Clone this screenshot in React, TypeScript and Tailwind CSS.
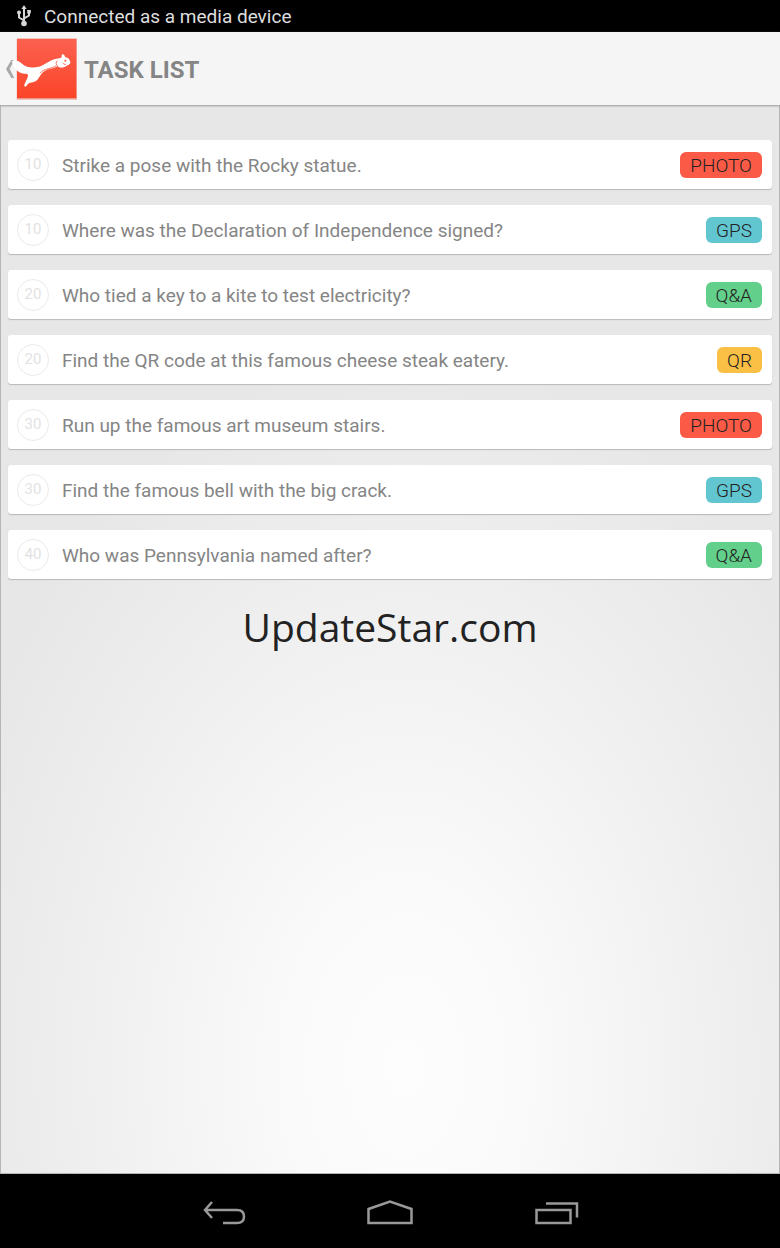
import React from 'react';

type TaskKind = 'PHOTO' | 'GPS' | 'Q&A' | 'QR';

interface TaskRowProps {
  points: number;
  title: string;
  kind: TaskKind;
}

const tasks: TaskRowProps[] = [
  { points: 10, title: 'Strike a pose with the Rocky statue.', kind: 'PHOTO' },
  { points: 10, title: 'Where was the Declaration of Independence signed?', kind: 'GPS' },
  { points: 20, title: 'Who tied a key to a kite to test electricity?', kind: 'Q&A' },
  { points: 20, title: 'Find the QR code at this famous cheese steak eatery.', kind: 'QR' },
  { points: 30, title: 'Run up the famous art museum stairs.', kind: 'PHOTO' },
  { points: 30, title: 'Find the famous bell with the big crack.', kind: 'GPS' },
  { points: 40, title: 'Who was Pennsylvania named after?', kind: 'Q&A' },
];

const kindColors: Record<TaskKind, string> = {
  PHOTO: 'bg-[#fb5b46]',
  GPS: 'bg-[#62c6d0]',
  'Q&A': 'bg-[#62cf8a]',
  QR: 'bg-[#f9c045]',
};

const UsbIcon: React.FC = () => (
  <svg className="h-[22px] w-4" viewBox="0 0 16 22" fill="none" stroke="#d8d8d8" strokeWidth="2" aria-hidden="true">
    <path d="M8 3v15M8 15.5l-5-3V8M8 13.5l5-3V7" />
    <path d="M8 0l2.6 4H5.4z" fill="#d8d8d8" stroke="none" />
    <circle cx="8" cy="18.500" r="2.8" fill="#d8d8d8" stroke="none" />
    <circle cx="3" cy="7.5" r="2" fill="#d8d8d8" stroke="none" />
    <path d="M11.2 5h3.6v3.6h-3.6z" fill="#d8d8d8" stroke="none" />
  </svg>
);

const SquirrelLogo: React.FC = () => (
  <svg className="h-[62px] w-[72px]" viewBox="0 0 216 186" aria-hidden="true">
    <defs>
      <linearGradient id="logo-bg" x1="0" y1="0" x2="0" y2="1">
        <stop offset="0" stopColor="#fb6150" />
        <stop offset="1" stopColor="#fb4529" />
      </linearGradient>
    </defs>
    <path d="M19 66L3 93l16 27h9L14 93l14-27z" fill="#a9a9a9" />
    <path d="M35 2h181v183H35z" fill="#e9b5ac" />
    <path d="M36 2h178v179H36z" fill="url(#logo-bg)" />
    <path
      d="M26 66c12 1 18 5 27 13 10 8 23 11 38 9 16-1 25-8 38-15 10-6 22-11 34-12 4-1 6-2 7-4-1-4 0-7 3-8 4 0 6 3 7 8 8 1 13 6 15 12 2 5 1 9-4 11-5 1-8 6-15 8-7 2-14 1-19-4-4 5-12 7-20 8-13 2-22 8-28 16-5 7-8 15-16 21-9 6-17 3-23 8-4 3-5 7-9 9-4 0-4-5-1-11 4-8 9-16 9-23 0-5-4-5-10-5-13 0-23-7-29-16-5-8-6-15-10-20z"
      fill="#fff"
    />
    <path d="M105 106c5-7 14-11 25-14 9-2 16-4 24-9M157 68c-5 5-5 12 1 15M183 79c-4 1-7-1-10-4" fill="none" stroke="#fb5340" strokeWidth="2.5" />
    <circle cx="181" cy="68" r="3" fill="#fb5340" />
  </svg>
);

const TaskRow: React.FC<TaskRowProps> = ({ points, title, kind }) => (
  <li className="flex h-[49px] items-center rounded-[3px] bg-white pr-[10px] pl-[9px] shadow-[0_1px_1px_#b8b8b8]">
    <span className="flex size-8 shrink-0 items-center justify-center rounded-full border border-[#ebebeb] text-[15px] text-[#e2e2e2]">
      {points}
    </span>
    <span className="ml-[13px] flex-1 pt-0.5 text-[19px] leading-6 text-[#858585]">{title}</span>
    <span className={`rounded-md px-[10px] pt-px text-[19px] leading-[25px] font-light text-[#222] ${kindColors[kind]}`}>
      {kind}
    </span>
  </li>
);

const App: React.FC = () => {
  return (
    <div className="flex min-h-screen flex-col bg-black font-['Roboto',sans-serif]">
      <div className="flex h-8 items-center gap-3 pl-4 text-[19px] text-[#dedede]">
        <UsbIcon />
        <span className="pt-0.5">Connected as a media device</span>
      </div>

      <header className="relative flex h-[73px] items-center bg-[#f5f5f5] shadow-[0_1px_2px_#999]">
        <button type="button" className="ml-[5px]" aria-label="Navigate up">
          <SquirrelLogo />
        </button>
        <h1 className="ml-[7px] pt-0.5 text-2xl font-bold text-[#858585]">TASK LIST</h1>
      </header>

      <main className="flex-1 border-x border-b border-[#b5b5b5] bg-[radial-gradient(ellipse_480px_720px_at_52%_90%,#fdfdfd_0%,#fafafa_25%,#ededed_75%,#e7e7e7_100%)] px-[7px] pt-[35px]">
        <ul className="flex flex-col gap-4">
          {tasks.map((task) => (
            <TaskRow key={task.title} {...task} />
          ))}
        </ul>
        <p className="pt-5 text-center font-['Open_Sans',sans-serif] text-[39px] leading-[56px] text-[#222]">
          UpdateStar.com
        </p>
      </main>

      <nav className="flex h-[74px] items-center justify-center gap-[120px] pt-1">
        <button type="button" aria-label="Back">
          <svg className="h-7 w-12" viewBox="0 0 48 28" fill="none" stroke="#999" strokeWidth="2.5">
            <path d="M14 3L7 11l7 8M7 11h32q7 0 7 6.500t-7 6.500H25" />
          </svg>
        </button>
        <button type="button" aria-label="Home">
          <svg className="h-7 w-12" viewBox="0 0 48 28" fill="none" stroke="#999" strokeWidth="2.5">
            <path d="M2.500 24V10L24 2.500 45.500 10v14z" />
          </svg>
        </button>
        <button type="button" aria-label="Recent apps">
          <svg className="h-7 w-12" viewBox="0 0 48 28" fill="none" stroke="#999" strokeWidth="2.5">
            <path d="M2.500 11h34v13H2.500zM12 4.500h31v14" />
          </svg>
        </button>
      </nav>
    </div>
  );
};

export default App;
